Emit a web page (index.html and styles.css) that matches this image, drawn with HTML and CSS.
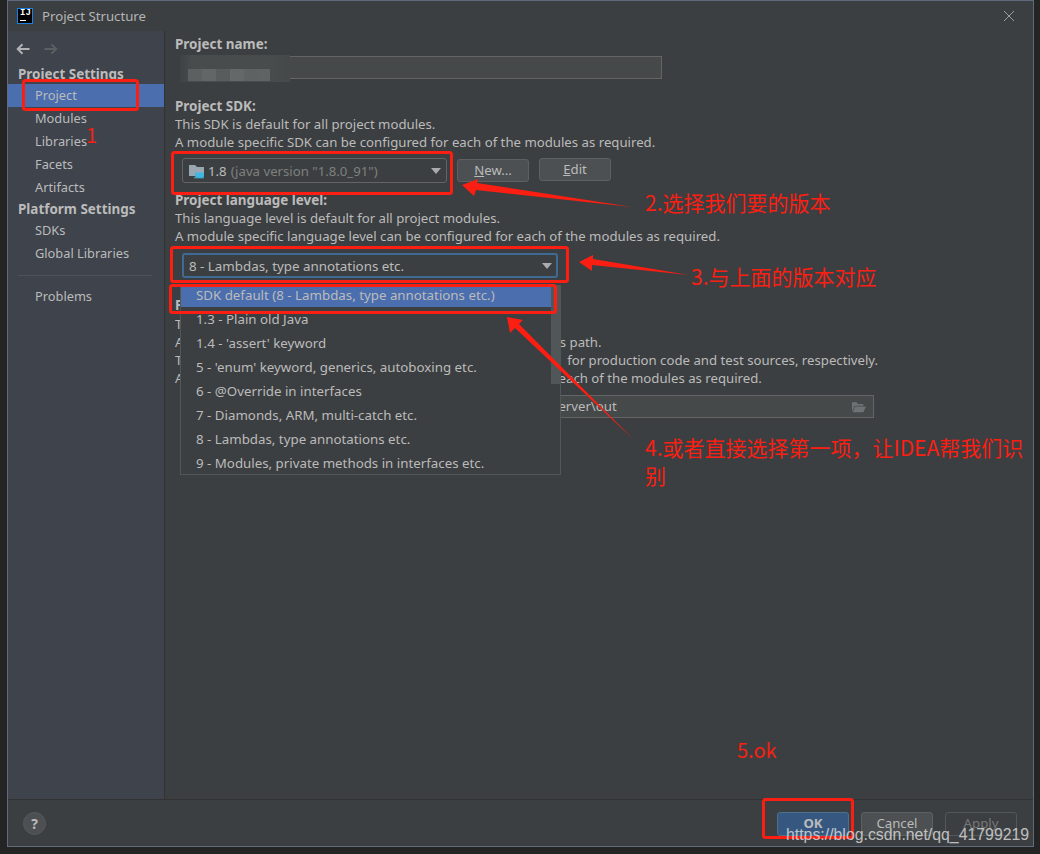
FILE: index.html
```html
<!DOCTYPE html>
<html lang="en">
<head>
<meta charset="utf-8">
<title>Project Structure</title>
<link rel="stylesheet" href="styles.css">
</head>
<body>
<div class="window">
  <header class="titlebar">
    <span class="app-icon"><span class="app-ij">IJ</span><span class="app-bar"></span></span>
    <span class="title">Project Structure</span>
    <svg class="close" width="12" height="12" viewBox="0 0 12 12"><path d="M1 1l10 10M11 1L1 11" stroke="#9a9c9e" stroke-width="1" fill="none"/></svg>
  </header>
  <div class="main">
    <nav class="sidebar">
      <div class="history">
        <svg width="14" height="12" viewBox="0 0 14 12"><path d="M13.5 6H2M6.5 1.2L1.7 6l4.8 4.8" stroke="#afb1b3" stroke-width="2" fill="none"/></svg>
        <svg width="14" height="12" viewBox="0 0 14 12"><path d="M.5 6H12M7.500 1.200L12.300 6l-4.800 4.800" stroke="#5b5f62" stroke-width="2" fill="none"/></svg>
      </div>
      <div class="group first">Project Settings</div>
      <div class="item selected">Project</div>
      <div class="item">Modules</div>
      <div class="item">Libraries</div>
      <div class="item">Facets</div>
      <div class="item">Artifacts</div>
      <div class="group">Platform Settings</div>
      <div class="item">SDKs</div>
      <div class="item">Global Libraries</div>
      <div class="nav-sep"></div>
      <div class="item">Problems</div>
    </nav>
    <section class="content">
      <div class="label top">Project name:</div>
      <div class="field name-field">
        <div class="smudge"><span></span><span></span><span></span><span></span><span></span><span></span></div>
      </div>

      <div class="label gap18">Project SDK:</div>
      <div class="line">This SDK is default for all project modules.</div>
      <div class="line">A module specific SDK can be configured for each of the modules as required.</div>
      <div class="sdk-row">
        <div class="combo sdk-combo">
          <svg class="folder" width="16" height="16" viewBox="0 0 16 16"><path d="M0 2h6l2 2h7v9H0z" fill="#9aa7b0"/><path d="M6 9.500h9v3.200a2 2 0 0 1-2 2h-5a2 2 0 0 1-2-2z" fill="#40b6e0"/><path d="M5 14.800h10" stroke="#40b6e0" stroke-width="1"/></svg>
          <span class="sdk-name">1.8</span>
          <span class="sdk-ver">(java version "1.8.0_91")</span>
          <svg class="caret" width="10" height="6" viewBox="0 0 10 6"><path d="M0 0h10L5 6z" fill="#a9abad"/></svg>
        </div>
        <button class="btn new-btn"><u>N</u>ew...</button>
        <button class="btn"><u>E</u>dit</button>
      </div>

      <div class="label gap8">Project language level:</div>
      <div class="line">This language level is default for all project modules.</div>
      <div class="line">A module specific language level can be configured for each of the modules as required.</div>
      <div class="combo lang-combo">
        <span>8 - Lambdas, type annotations etc.</span>
        <svg class="caret" width="10" height="6" viewBox="0 0 10 6"><path d="M0 0h10L5 6z" fill="#a9abad"/></svg>
      </div>

      <div class="label gap18">P<span class="covered">roject compiler output:</span></div>
      <div class="line gap1">T<span class="covered">his path is used to store all project compilation results.</span></div>
      <div class="line">A<span class="covered"> directory corresponding to each module is created under thi</span>s path.</div>
      <div class="line">T<span class="covered">his directory contains two subdirectories: Production and Test</span> for production code and test sources, respectively.</div>
      <div class="line">A<span class="covered"> module specific compiler output path can be configured for </span>each of the modules as required.</div>
      <div class="field output-field">
        <span><span class="covered">E:\Workspace\projects\demo\web-s</span>erver\out</span>
        <svg class="open-folder" width="14" height="12" viewBox="0 0 16 13"><path d="M0 1h5l2 2h6v2H3L0 12z" fill="#6e7274"/><path d="M3.500 6H16l-3 6.500H.8z" fill="#6e7274"/></svg>
      </div>
    </section>
  </div>
  <footer class="footer">
    <button class="help">?</button>
    <div class="actions">
      <button class="btn ok">OK</button>
      <button class="btn">Cancel</button>
      <button class="btn disabled">Apply</button>
    </div>
  </footer>
</div>

<ul class="popup">
  <li class="active">SDK default (8 - Lambdas, type annotations etc.)</li>
  <li>1.3 - Plain old Java</li>
  <li>1.4 - 'assert' keyword</li>
  <li>5 - 'enum' keyword, generics, autoboxing etc.</li>
  <li>6 - @Override in interfaces</li>
  <li>7 - Diamonds, ARM, multi-catch etc.</li>
  <li>8 - Lambdas, type annotations etc.</li>
  <li>9 - Modules, private methods in interfaces etc.</li>
  <li class="thumb" aria-hidden="true"></li>
</ul>

<svg class="marks" width="1040" height="854" viewBox="0 0 1040 854">
  <g fill="none" stroke="#fb1e12" stroke-width="3">
    <rect x="23.500" y="80.500" width="114" height="29" rx="2"/>
    <rect x="172.500" y="152.500" width="279" height="41" rx="2"/>
    <rect x="171.500" y="247.500" width="396" height="34" rx="2"/>
    <rect x="170.500" y="285.500" width="385" height="27" rx="2"/>
    <rect x="763.500" y="799.500" width="89" height="38" rx="2"/>
  </g>
  <g fill="#fb1e12">
    <polygon points="462,185 478,179 477,183 632,207 476,190 474,196"/>
    <polygon points="579,262 593,255 593,259 689,275 592,265 592,271"/>
    <polygon points="507,317 523,320 519,324 633,439 515,328 510,333"/>
  </g>
</svg>
<div class="note n1">1</div>
<div class="note n2">2.选择我们要的版本</div>
<div class="note n3">3.与上面的版本对应</div>
<div class="note n4">4.或者直接选择第一项&#xFF0C;让IDEA帮我们识别</div>
<div class="note n5">5.ok</div>
<div class="watermark">https://blog.csdn.net/qq_41799219</div>
</body>
</html>
```

FILE: styles.css
```css
* { box-sizing: border-box; }
html, body { margin: 0; padding: 0; }
body {
  position: relative;
  width: 1040px;
  height: 854px;
  overflow: hidden;
  background: #242424;
  font-family: "Noto Sans", "Open Sans", sans-serif;
  font-size: 13.2px;
  color: #bbbbbb;
}
.covered { visibility: hidden; }
.window {
  margin-left: 7px;
  width: 1027px;
  height: 847px;
  display: flex;
  flex-direction: column;
  background: #3c3f41;
  border: 1px solid #5f6a7c;
}
.titlebar {
  height: 30px;
  flex: none;
  display: flex;
  align-items: center;
  padding: 0 18px 0 9px;
  gap: 9px;
}
.app-icon {
  position: relative;
  width: 16px;
  height: 16px;
  background: #000;
  border: 1px solid #1a7fe0;
  display: block;
}
.app-ij {
  display: block;
  font-family: "Liberation Mono", monospace;
  font-weight: 700;
  font-size: 9px;
  line-height: 9px;
  color: #fff;
  padding-left: 2px;
}
.app-bar {
  display: block;
  width: 6px;
  height: 1px;
  margin: 2px 0 0 2px;
  background: #fff;
}
.title { flex: 1; line-height: 18px; color: #b5b5b5; }
.main { flex: 1; display: flex; min-height: 0; }
.sidebar {
  width: 157px;
  flex: none;
  background: #3e434c;
  border-right: 1px solid #323232;
}
.history { height: 32px; display: flex; align-items: center; gap: 14px; padding: 4px 0 0 8px; }
.group {
  height: 20px;
  line-height: 20px;
  padding-left: 10px;
  font-weight: 700;
  font-size: 13.45px;
}
.group.first { height: 21px; line-height: 22px; }
.item { height: 23px; line-height: 23px; padding-left: 27px; font-size: 12.8px; }
.item.selected { background: #4b6eaf; }
.nav-sep { height: 1px; margin: 10px 12px 9px 10px; background: #4d5158; }
.content { flex: 1; padding: 4px 0 0 10px; min-width: 0; }
.label { height: 18px; line-height: 18px; font-weight: 700; font-size: 13.45px; }
.gap18 { margin-top: 18px; }
.gap8 { margin-top: 8px; }
.gap1 { margin-top: 1px; }
.line { height: 18px; line-height: 18px; white-space: nowrap; }
.field {
  position: relative;
  margin: 3px 0 0 7px;
  height: 23px;
  background: #45494a;
  border: 1px solid #646464;
}
.name-field { width: 480px; }
.smudge {
  position: absolute;
  left: -3px;
  top: -2px;
  width: 110px;
  height: 27px;
  display: flex;
  align-items: flex-end;
  padding: 0 0 1px 8px;
  background: linear-gradient(90deg, #3f4243 0, #484c4d 12px, #484c4d 88px, #46494a 100%);
}
.smudge span { width: 14px; height: 12px; background: #5d6061; }
.smudge span:nth-child(2) { background: #636667; }
.smudge span:nth-child(3) { background: #595c5d; }
.smudge span:nth-child(4) { background: #656869; }
.smudge span:nth-child(5) { background: #5f6263; }
.smudge span:nth-child(6) { width: 12px; background: #606364; }
.output-field {
  margin-top: 8px;
  width: 692px;
  display: flex;
  align-items: center;
  justify-content: space-between;
  padding: 0 7px 0 155px;
  line-height: 21px;
  white-space: nowrap;
}
.open-folder { flex: none; }
.combo {
  display: flex;
  align-items: center;
  height: 25px;
  margin-left: 7px;
  border: 1px solid #646464;
  border-radius: 3px;
  background: #3c3f41;
  padding: 0 5px 0 6px;
  white-space: nowrap;
}
.caret { margin-left: auto; flex: none; }
.sdk-row { display: flex; align-items: flex-start; gap: 10px; margin-top: 7px; }
.sdk-combo { width: 265px; }
.folder { flex: none; margin-right: 3px; }
.sdk-name { margin-right: 4px; }
.sdk-ver { color: #7f7f7f; }
.lang-combo {
  width: 376px;
  margin-top: 8px;
  border: 2px solid #3f6a94;
  padding: 0 4px 0 5px;
  font-size: 13.35px;
}
.btn {
  width: 72px;
  height: 23px;
  padding: 0;
  font: inherit;
  line-height: 21px;
  color: #bbbbbb;
  background: #4c5052;
  border: 1px solid #5e6060;
  border-radius: 3px;
}
.new-btn { margin-top: 1px; }
.footer {
  height: 47px;
  flex: none;
  display: flex;
  align-items: center;
  justify-content: space-between;
  padding: 0 16px 0 15px;
  border-top: 1px solid #323232;
}
.help {
  width: 23px;
  height: 23px;
  padding: 0;
  border: 1px solid #56595b;
  border-radius: 50%;
  background: #4c5052;
  color: #bbbbbb;
  font: 700 14px/21px "Noto Sans", sans-serif;
}
.actions { display: flex; gap: 12px; margin-top: 1px; }
.ok { background: #365880; border-color: #4c708c; font-weight: 700; height: 24px; }
.actions .btn:not(.ok) { height: 24px; }
.disabled { background: transparent; border-color: #53575a; color: #777777; }
.popup {
  position: absolute;
  left: 180px;
  top: 285px;
  width: 381px;
  height: 190px;
  margin: 0;
  padding: 0;
  list-style: none;
  background: #3c3f41;
  border: 1px solid #515658;
  border-top: 0;
  font-size: 13.3px;
}
.popup li {
  height: 24px;
  line-height: 20px;
  padding-left: 15px;
  margin-right: 9px;
}
.popup li.active { height: 22px; background: #4b6eaf; margin-bottom: 2px; }
.popup li.thumb {
  position: absolute;
  right: 0;
  top: 0;
  width: 9px;
  height: 99px;
  margin: 0;
  padding: 0;
  background: #515658;
}
.marks { position: absolute; left: 0; top: 0; }
.note {
  position: absolute;
  font-family: "Noto Sans CJK SC", "Noto Sans", sans-serif;
  font-size: 21px;
  line-height: 28px;
  color: #fb1e12;
}
.n1 { left: 86px; top: 121px; font-size: 20px; }
.n2 { left: 645px; top: 188px; white-space: nowrap; }
.n3 { left: 691px; top: 262px; white-space: nowrap; }
.n4 { left: 645px; top: 433px; width: 385px; }
.n5 { left: 737px; top: 736px; font-size: 20px; }
.watermark {
  position: absolute;
  left: 786px;
  top: 826px;
  font-family: "Liberation Sans", sans-serif;
  font-size: 15.85px;
  line-height: 18px;
  color: rgba(225, 225, 225, 0.8);
  white-space: nowrap;
}
```
